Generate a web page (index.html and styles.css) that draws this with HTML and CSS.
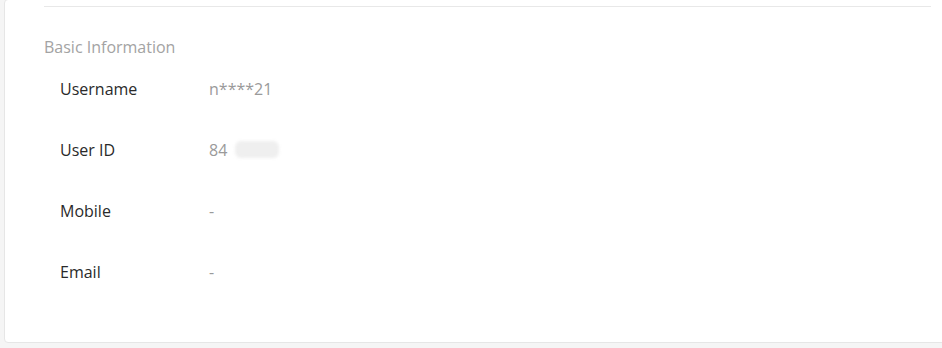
FILE: index.html
```html
<!DOCTYPE html>
<html lang="en">
	<head>
		<title>Account</title>
		<link rel="stylesheet" href="styles.css">
	</head>
	<body class="body">
		<div class="card">
			<div class="divider"></div>
			<h4 class="section-title">Basic Information</h4>
			<div class="info-row">
				<span class="info-label">Username</span>
				<span class="info-value">n****21</span>
			</div>
			<div class="info-row">
				<span class="info-label">User ID</span>
				<span class="info-value">84<span class="masked"></span></span>
			</div>
			<div class="info-row">
				<span class="info-label">Mobile</span>
				<span class="info-value">-</span>
			</div>
			<div class="info-row">
				<span class="info-label">Email</span>
				<span class="info-value">-</span>
			</div>
		</div>
	</body>
</html>
```

FILE: styles.css
```css
.body {
	margin: 0;
	height: 348px;
	overflow: hidden;
	background: #f5f5f5;
	font-family: "Open Sans", "Noto Sans", sans-serif;
}
.card {
	margin: -1px -20px 0 4px;
	padding: 6px 30px 40px 39px;
	background: #fff;
	border: 1px solid #e6e6e6;
	border-radius: 4px;
}
.divider {
	height: 1px;
	background: #e8e8e8;
}
.section-title {
	margin: 29px 0 0;
	font-size: 16px;
	font-weight: normal;
	line-height: 22px;
	color: #a3a3a3;
}
.info-row {
	display: flex;
	align-items: center;
	height: 61px;
	padding-left: 16px;
	font-size: 16px;
}
.info-label {
	width: 149px;
	color: #2a2a2a;
}
.info-value {
	display: flex;
	align-items: center;
	color: #9a9a9a;
}
.masked {
	display: inline-block;
	width: 44px;
	height: 17px;
	margin-left: 8px;
	background: #efefef;
	border-radius: 6px;
	filter: blur(1.5px);
}
```
